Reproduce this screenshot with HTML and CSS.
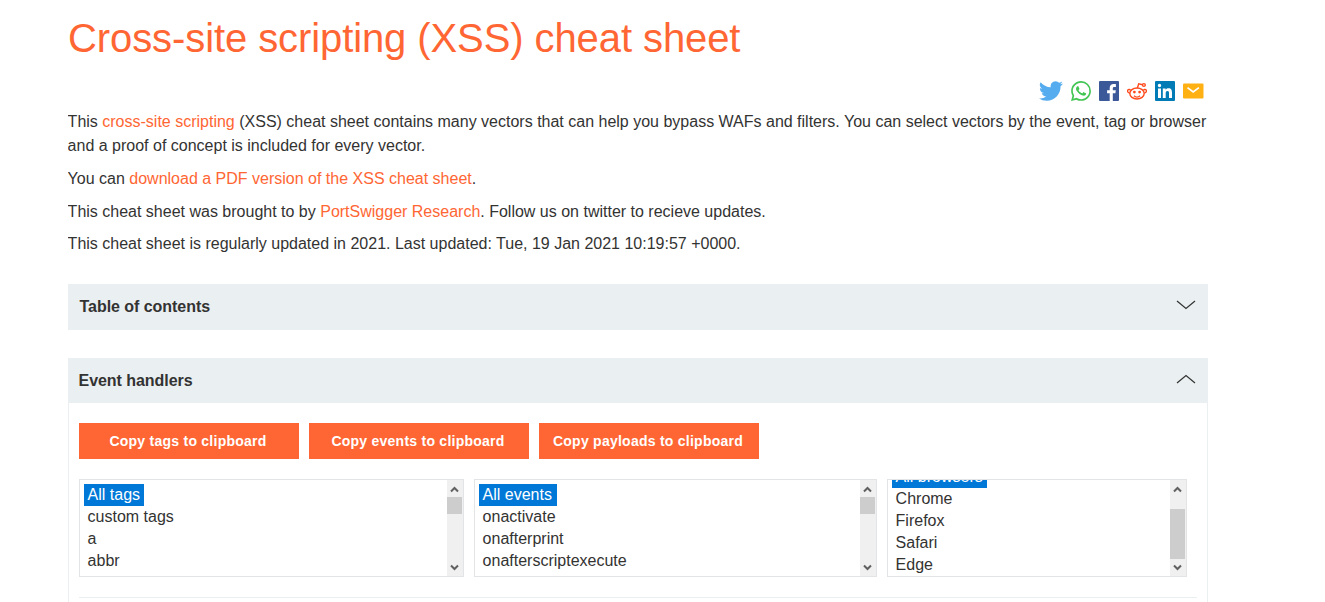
FILE: index.html
```html
<!DOCTYPE html>
<html lang="en">
<head>
<meta charset="utf-8">
<title>Cross-site scripting (XSS) cheat sheet</title>
<link rel="stylesheet" href="styles.css">
</head>
<body>
<main class="page">
  <h1 class="title">Cross-site scripting (XSS) cheat sheet</h1>
  <div class="share">
    <svg class="twitter" width="24" height="24" viewBox="0 0 24 24" fill="#55acee"><path d="M23.95 4.57a10 10 0 0 1-2.82.77 4.96 4.96 0 0 0 2.16-2.72c-.95.55-2 .95-3.13 1.18a4.92 4.92 0 0 0-8.38 4.48C7.69 8.1 4.07 6.13 1.64 3.16a4.92 4.92 0 0 0 1.52 6.57 4.9 4.9 0 0 1-2.23-.61v.06a4.92 4.92 0 0 0 3.95 4.83 5 5 0 0 1-2.21.08 4.94 4.94 0 0 0 4.6 3.42A9.87 9.87 0 0 1 0 19.54a13.99 13.99 0 0 0 7.55 2.21c9.05 0 14-7.5 14-13.98 0-.21 0-.42-.02-.63a9.94 9.94 0 0 0 2.46-2.55z"/></svg>
    <svg class="whatsapp" width="20" height="20" viewBox="0 0 24 24" fill="#43c553"><path d="M17.47 14.38c-.3-.15-1.76-.87-2.03-.97-.27-.1-.47-.15-.67.15-.2.3-.77.97-.94 1.16-.17.2-.35.22-.64.08-.3-.15-1.26-.46-2.39-1.48-.88-.79-1.48-1.76-1.65-2.06-.17-.3-.02-.46.13-.6.13-.14.3-.35.45-.53.15-.17.2-.3.3-.5.1-.2.05-.37-.03-.52-.07-.15-.67-1.61-.91-2.21-.24-.58-.49-.5-.67-.51h-.57c-.2 0-.52.07-.79.37-.27.3-1.04 1.02-1.04 2.48s1.07 2.88 1.21 3.07c.15.2 2.1 3.2 5.08 4.49.71.31 1.26.49 1.69.63.71.23 1.36.2 1.87.12.57-.09 1.76-.72 2.01-1.41.25-.7.25-1.29.17-1.42-.07-.12-.27-.2-.57-.34m-5.42 7.4h-.01a9.87 9.87 0 0 1-5.03-1.38l-.36-.21-3.74.98 1-3.65-.24-.37a9.86 9.86 0 0 1-1.51-5.26c0-5.45 4.44-9.88 9.89-9.88a9.88 9.88 0 0 1 9.88 9.89c0 5.45-4.44 9.88-9.88 9.88m8.41-18.3A11.82 11.82 0 0 0 12.05 0C5.5 0 .16 5.34.16 11.89c0 2.1.55 4.14 1.59 5.95L.06 24l6.3-1.65a11.88 11.88 0 0 0 5.68 1.45h.01c6.55 0 11.89-5.34 11.89-11.89a11.82 11.82 0 0 0-3.48-8.41z"/></svg>
    <svg width="20" height="20" viewBox="0 0 20 20"><rect width="20" height="20" rx="1" fill="#3b5998"/><path d="M13.8 20v-7.700h2.600l.4-3h-3V7.400c0-.9.2-1.500 1.500-1.500h1.600V3.200c-.3 0-1.200-.1-2.300-.1-2.300 0-3.900 1.400-3.900 4v2.200H8.100v3h2.600V20z" fill="#fff"/></svg>
    <svg width="20" height="20" viewBox="0 0 20 20" fill="none" stroke="#ff4a1c" stroke-width="1.400"><ellipse cx="10" cy="12.500" rx="7.200" ry="5.500"/><path d="M3.600 9.400C2.500 7.200-.5 9.100.9 11c.4.7 1.200 1.100 1.900 1.100M16.400 9.400c1.100-2.200 4.100-.3 2.700 1.600-.4.7-1.200 1.100-1.900 1.100M10.400 7l1.300-4.100 4 .9M7 14.800c1.600 1.500 4.400 1.500 6 0"/><circle cx="16.900" cy="4" r="1.400"/><circle cx="7.400" cy="11.100" r="1.400" fill="#ff4a1c" stroke="none"/><circle cx="12.600" cy="11.100" r="1.400" fill="#ff4a1c" stroke="none"/></svg>
    <svg width="20" height="20" viewBox="0 0 20 20"><rect width="20" height="20" rx="1" fill="#007bb6"/><path d="M3 7.500h3V17H3zM4.500 2.800a1.700 1.700 0 1 1 0 3.400 1.700 1.700 0 0 1 0-3.400M7.800 7.500h2.800v1.300c.5-.8 1.400-1.500 2.800-1.500 3 0 3.600 1.900 3.600 4.500V17h-3v-4.600c0-1.200 0-2.500-1.500-2.500-1.600 0-1.800 1.200-1.800 2.500V17H7.800z" fill="#fff"/></svg>
    <svg width="21" height="20" viewBox="0 0 21 20"><rect y="2.500" width="20.500" height="15" rx="1" fill="#ffb013"/><path d="M4.500 6.600l5.700 4.300 5.700-4.300" fill="none" stroke="#fff" stroke-width="1.700"/></svg>
  </div>
  <section class="intro">
    <p>This <a>cross-site scripting</a> (XSS) cheat sheet contains many vectors that can help you bypass WAFs and filters. You can select vectors by the event, tag or browser and a proof of concept is included for every vector.</p>
    <p>You can <a>download a PDF version of the XSS cheat sheet</a>.</p>
    <p>This cheat sheet was brought to by <a>PortSwigger Research</a>. Follow us on twitter to recieve updates.</p>
    <p>This cheat sheet is regularly updated in 2021. Last updated: Tue, 19 Jan 2021 10:19:57 +0000.</p>
  </section>
  <div class="bar bar-toc"><span>Table of contents</span><svg width="20" height="10" viewBox="0 0 20 10"><path d="M1 1l9 7.500L19 1"/></svg></div>
  <section class="panel">
    <div class="bar bar-events"><span>Event handlers</span><svg width="20" height="10" viewBox="0 0 20 10"><path d="M1 9l9-7.500L19 9"/></svg></div>
    <div class="panel-body">
      <div class="buttons">
        <button class="button">Copy tags to clipboard</button>
        <button class="button">Copy events to clipboard</button>
        <button class="button">Copy payloads to clipboard</button>
      </div>
      <div class="lists">
        <div class="list">
          <ul class="options"><li class="selected">All tags</li><li>custom tags</li><li>a</li><li>abbr</li></ul>
          <div class="scrollbar"><svg width="16" height="17"><path d="M4 11.500L7.500 8 11 11.500"/></svg><div class="track"><div class="thumb"></div></div><svg width="16" height="17"><path d="M4 6.500L7.500 10 11 6.500"/></svg></div>
        </div>
        <div class="list">
          <ul class="options"><li class="selected wide">All events</li><li>onactivate</li><li>onafterprint</li><li>onafterscriptexecute</li></ul>
          <div class="scrollbar"><svg width="16" height="17"><path d="M4 11.500L7.500 8 11 11.500"/></svg><div class="track"><div class="thumb"></div></div><svg width="16" height="17"><path d="M4 6.500L7.500 10 11 6.500"/></svg></div>
        </div>
        <div class="list">
          <ul class="options scrolled"><li class="selected">All browsers</li><li>Chrome</li><li>Firefox</li><li>Safari</li><li>Edge</li></ul>
          <div class="scrollbar"><svg width="16" height="17"><path d="M4 11.500L7.500 8 11 11.500"/></svg><div class="track at-end"><div class="thumb large"></div></div><svg width="16" height="17"><path d="M4 6.500L7.500 10 11 6.500"/></svg></div>
        </div>
      </div>
      <hr class="rule">
    </div>
  </section>
</main>
</body>
</html>
```
FILE: styles.css
```css
* { box-sizing: border-box; }
html, body { height: 100%; }
body {
  margin: 0;
  overflow: hidden;
  background: #fff;
  color: #333332;
  font: 16px/24px "Liberation Sans", Arial, sans-serif;
}
.page {
  display: flex;
  flex-direction: column;
  width: 1140px;
  height: 602px;
  margin-left: 68px;
  overflow: hidden;
}
.title {
  margin: 13px 0 0;
  color: #ff6633;
  font-size: 40px;
  font-weight: 400;
  line-height: 50px;
  letter-spacing: -0.09px;
  white-space: nowrap;
}
.share {
  display: flex;
  justify-content: flex-end;
  align-items: center;
  gap: 8px;
  height: 24px;
  margin-top: 16px;
  padding-right: 4px;
}
.intro { margin: 7px 0 0 -0.4px; }
.intro p { margin: 0 0 8.700px; }
.intro p:nth-child(2) { margin-bottom: 9px; }
.intro p:nth-child(3) { margin-bottom: 8.300px; }
.intro a { color: #ff6633; }
.bar {
  display: flex;
  flex: none;
  align-items: center;
  justify-content: space-between;
  height: 45px;
  padding: 0 12px 0 10.500px;
  background: #eaeff2;
  font-weight: 700;
  letter-spacing: -0.04px;
}
.bar svg { margin-top: -3px; fill: none; stroke: #333332; stroke-width: 1.200; }
.bar-toc { height: 46px; margin-top: 19px; padding-left: 11.500px; }
.bar-events span { padding-top: 1px; }
.panel { flex: 1; margin-top: 28px; }
.panel-body {
  height: 220px;
  padding: 20px 10px 0;
  border: solid #eaeff2;
  border-width: 0 1px;
}
.buttons { display: flex; gap: 10px; }
.button {
  width: 220px;
  height: 36px;
  padding: 0 2px 0 0;
  border: 0;
  background: #ff6633;
  color: #fff;
  font: 700 14px/36px "Liberation Sans", Arial, sans-serif;
  letter-spacing: 0.25px;
}
.lists {
  display: grid;
  grid-template-columns: 385px 403px 300px;
  gap: 10px;
  margin-top: 20px;
}
.list {
  display: flex;
  height: 98px;
  overflow: hidden;
  border: 1px solid #e3e4e5;
}
.options {
  display: flex;
  flex: 1;
  flex-direction: column;
  align-items: flex-start;
  margin: 0;
  padding: 4px;
  list-style: none;
}
.options li { flex: none; height: 22px; padding: 0 4px 0 3.600px; line-height: 22px; }
.options .selected { background: #0078d7; color: #fff; }
.options .wide { padding-right: 5px; }
.scrolled { margin-top: -18px; }
.scrollbar { display: flex; flex-direction: column; width: 16px; background: #f0f0f0; }
.scrollbar svg { flex: none; fill: none; stroke: #606060; stroke-width: 2; }
.track { display: flex; flex: 1; flex-direction: column; }
.at-end { justify-content: flex-end; }
.thumb { width: 15px; height: 17px; background: #cdcdcd; }
.large { height: 50px; }
.rule { height: 1px; margin: 20px 0 0; border: 0; background: #eaeff2; }
```
